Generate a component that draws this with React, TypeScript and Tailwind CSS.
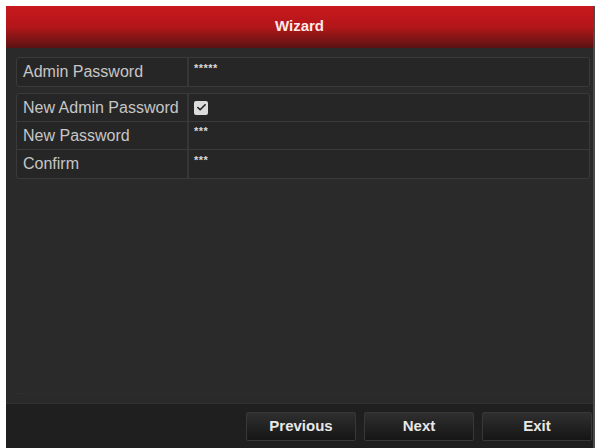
import { Check } from 'lucide-react'

const font = { fontFamily: '"Liberation Sans", Arial, sans-serif' }

const Row = ({
  label,
  children,
  last = false,
}: {
  label: string
  children: React.ReactNode
  last?: boolean
}) => (
  <div
    className={
      'flex h-[28px] items-stretch ' + (last ? '' : 'border-b border-[#3a3a3a]')
    }
  >
    <div className="flex w-[172px] items-center border-r-2 border-[#363636] pl-[6px] text-[16px] text-[#c6c6c6]">
      {label}
    </div>
    <div className="flex flex-1 items-center pl-[5px]">{children}</div>
  </div>
)

const Masked = ({ count }: { count: number }) => (
  <span className="-mt-[8px] text-[11px] font-bold tracking-[0.5px] text-[#d8d8d8]">
    {'*'.repeat(count)}
  </span>
)

const Button = ({ label }: { label: string }) => (
  <button className="flex h-[29px] w-[110px] items-center justify-center rounded-[2px] border border-[#383838] bg-gradient-to-b from-[#2f2f2f] to-[#161616] text-[15px] font-bold text-[#e8e8e8]">
    {label}
  </button>
)

export default function App() {
  return (
    <div
      className="h-[448px] w-[598px] overflow-hidden bg-white pl-[6px] pr-[3px] pt-[6px]"
      style={font}
    >
      <div className="flex h-full flex-col border-r-2 border-[#4a4a4a] bg-[#2a2a2a]">
        {/* Title bar */}
        <div className="flex h-[42px] items-center justify-center bg-gradient-to-b from-[#c8191d] via-[#b31619] to-[#5a1212] pb-[2px] text-[15px] font-bold text-[#fbe9e9]">
          Wizard
        </div>

        {/* Form */}
        <div className="flex flex-1 flex-col gap-[6px] pl-[10px] pr-[3px] pt-[9px]">
          <div className="rounded-[3px] border border-[#3a3a3a] bg-[#262626]">
            <Row label="Admin Password" last>
              <Masked count={5} />
            </Row>
          </div>
          <div className="rounded-[3px] border border-[#3a3a3a] bg-[#262626]">
            <Row label="New Admin Password">
              <span className="flex h-[14px] w-[14px] items-center justify-center rounded-[2px] bg-[#dcdcdc]">
                <Check className="h-[11px] w-[11px] text-[#222]" strokeWidth={3.5} />
              </span>
            </Row>
            <Row label="New Password">
              <Masked count={3} />
            </Row>
            <Row label="Confirm" last>
              <Masked count={3} />
            </Row>
          </div>
          <div className="mt-auto mb-[9px] border-b border-dotted border-[#303030]" />
        </div>

        {/* Footer */}
        <div className="flex h-[45px] items-center justify-end gap-[8px] border-t border-[#333] bg-[#1f1f1f] pr-[1px]">
          <Button label="Previous" />
          <Button label="Next" />
          <Button label="Exit" />
        </div>
      </div>
    </div>
  )
}
